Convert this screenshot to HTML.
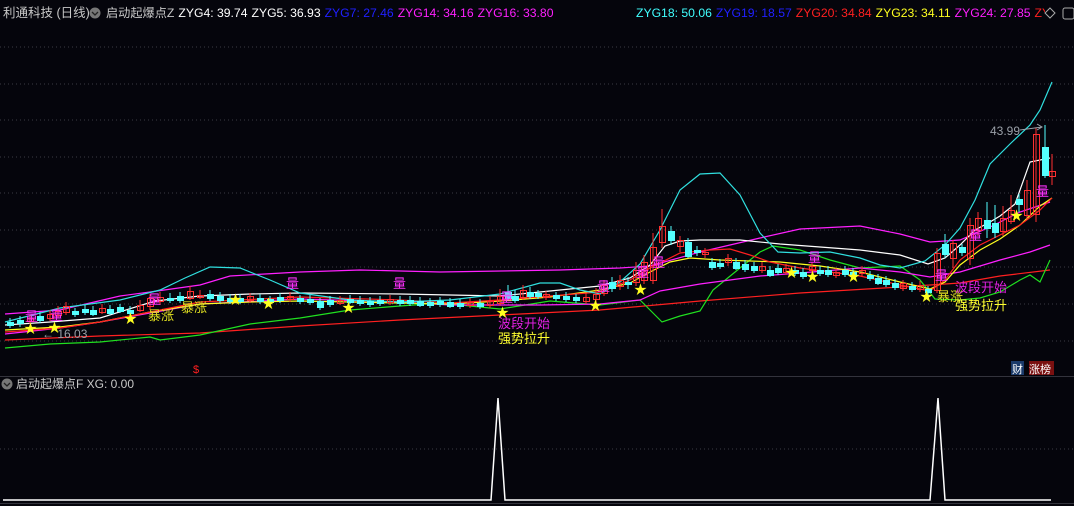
<!DOCTYPE html>
<html><head><meta charset="utf-8"><style>
html,body{margin:0;padding:0;background:#05050c;width:1074px;height:506px;overflow:hidden}
svg{display:block}
text{font-family:"Liberation Sans","Noto Sans CJK SC",sans-serif}
.u{fill:none;stroke:#ff3030;stroke-width:1}
.d{fill:#54ffff;stroke:#54ffff;stroke-width:1}
.wu{stroke:#ff3030}.wd{stroke:#54ffff}
.g{stroke:#3a3a44;stroke-dasharray:1 3}
.l{fill:none;stroke-width:1.2}
</style></head><body>
<svg width="1074" height="506" viewBox="0 0 1074 506">
<rect width="1074" height="506" fill="#05050c"/>
<g class="g">
<line x1="0" y1="47" x2="1074" y2="47"/><line x1="0" y1="84" x2="1074" y2="84"/>
<line x1="0" y1="120" x2="1074" y2="120"/><line x1="0" y1="157" x2="1074" y2="157"/>
<line x1="0" y1="193" x2="1074" y2="193"/><line x1="0" y1="230" x2="1074" y2="230"/>
<line x1="0" y1="267" x2="1074" y2="267"/><line x1="0" y1="304" x2="1074" y2="304"/>
<line x1="0" y1="341" x2="1074" y2="341"/><line x1="0" y1="449" x2="1074" y2="449"/>
</g>
<line x1="0" y1="376.5" x2="1074" y2="376.5" stroke="#33333c"/>
<line x1="0" y1="503.5" x2="1074" y2="503.5" stroke="#33333c"/>
<text x="3" y="17" font-size="12.5" fill="#c8c8c8">利通科技 (日线)</text>
<circle cx="95" cy="13" r="5.5" fill="#777"/><path d="M92 12 L95 15 L98 12" stroke="#222" fill="none" stroke-width="1.3"/>
<text x="106" y="17" font-size="12.2"><tspan fill="#c8c8c8">启动起爆点Z</tspan><tspan fill="#ffffff" dx="4">ZYG4: 39.74</tspan><tspan fill="#ffffff" dx="4">ZYG5: 36.93</tspan><tspan fill="#2020ff" dx="4">ZYG7: 27.46</tspan><tspan fill="#ff20ff" dx="4">ZYG14: 34.16</tspan><tspan fill="#ff20ff" dx="4">ZYG16: 33.80</tspan></text>
<text x="636" y="17" font-size="12.2"><tspan fill="#40ffff">ZYG18: 50.06</tspan><tspan fill="#2020ff" dx="4">ZYG19: 18.57</tspan><tspan fill="#ff2020" dx="4">ZYG20: 34.84</tspan><tspan fill="#ffff20" dx="4">ZYG23: 34.11</tspan><tspan fill="#ff20ff" dx="4">ZYG24: 27.85</tspan><tspan fill="#ff2020" dx="4">ZY</tspan></text>
<rect x="1045" y="6" width="29" height="14" fill="#05050c"/>
<path d="M1050 8 L1055 13 L1050 18 L1045 13 Z" stroke="#aaa" fill="none"/>
<rect x="1063" y="8" width="11" height="11" rx="2" stroke="#aaa" fill="none"/>
<polyline class="l" stroke="#ff2020" points="5,340 100,336 200,333 300,326 400,320 500,315 600,310 700,301 800,293 900,287 960,283 1000,276 1050,270"/>
<polyline class="l" stroke="#20e020" points="5,348 50,344 100,342 150,337 160,340 200,335 250,324 300,318 350,310 400,306 440,303 500,309 550,301 600,305 640,300 662,322 680,316 700,311 713,290 740,268 760,252 773,246 800,250 830,260 860,268 900,266 920,280 935,299 960,300 980,298 1000,292 1020,280 1030,275 1040,282 1050,260"/>
<polyline class="l" stroke="#ff20ff" points="5,334 60,328 100,322 150,313 200,304 300,299 400,302 450,305 540,305 600,304 640,300 660,291 700,284 760,276 800,273 860,268 900,272 930,277 960,272 1000,260 1030,252 1050,245"/>
<polyline class="l" stroke="#ff20ff" points="5,314 60,310 120,296 150,292 200,285 230,276 300,272 360,270 440,272 560,270 620,268 650,266 700,252 760,238 800,229 860,226 900,234 930,242 960,240 990,227 1020,212 1050,202"/>
<polyline class="l" stroke="#ffff20" points="5,330 60,327 100,322 150,312 200,304 250,302 300,301 400,303 450,304 500,301 550,297 600,290 630,283 650,272 670,262 690,258 720,260 780,262 820,266 860,272 900,282 930,289 945,282 960,265 980,250 1000,239 1020,225 1040,206 1052,198"/>
<polyline class="l" stroke="#ff2020" points="5,332 60,328 100,322 150,312 200,302 300,297 400,300 450,303 500,300 550,296 600,292 630,280 650,268 680,253 710,250 730,249 750,255 770,262 800,268 860,276 900,285 930,291 945,280 960,260 980,245 1000,235 1020,225 1040,210 1052,198"/>
<polyline class="l" stroke="#ffffff" points="5,325 50,322 100,318 155,301 200,296 250,294 300,293 400,294 450,295 500,296 540,292 600,286 630,278 650,265 665,246 680,241 700,240 740,240 780,244 820,247 860,250 900,255 928,264 945,258 960,245 975,230 990,222 1000,216 1015,204 1030,162 1050,158"/>
<polyline class="l" stroke="#30e0e0" points="5,322 60,308 120,300 160,290 185,278 210,267 240,268 270,280 300,293 350,300 400,302 450,300 500,294 540,283 560,283 580,290 600,294 620,282 640,264 660,230 680,190 700,174 720,173 740,195 760,233 778,252 800,253 830,252 860,258 880,265 900,268 925,261 945,245 960,228 975,200 990,164 1010,144 1030,125 1040,110 1052,82"/>
<g stroke-width="1">
<line class="wd" x1="10" y1="318" x2="10" y2="328"/><rect class="d" x="7.5" y="322.5" width="6" height="3"/>
<line class="wd" x1="20" y1="316" x2="20" y2="327"/><rect class="d" x="17.5" y="320.5" width="6" height="3"/>
<line class="wu" x1="30" y1="315" x2="30" y2="324"/><rect class="u" x="27.5" y="318.5" width="6" height="3"/>
<line class="wd" x1="40" y1="312" x2="40" y2="323"/><rect class="d" x="37.5" y="316.5" width="6" height="4"/>
<line class="wu" x1="50" y1="310" x2="50" y2="321"/><rect class="u" x="47.5" y="314.5" width="6" height="4"/>
<line class="wu" x1="58" y1="306" x2="58" y2="318"/><rect class="u" x="55.5" y="311.5" width="6" height="4"/>
<line class="wu" x1="66" y1="302" x2="66" y2="315"/><rect class="u" x="63.5" y="306.5" width="6" height="6"/>
<line class="wd" x1="75" y1="308" x2="75" y2="317"/><rect class="d" x="72.5" y="311.5" width="6" height="3"/>
<line class="wd" x1="85" y1="305" x2="85" y2="315"/><rect class="d" x="82.5" y="309.5" width="6" height="3"/>
<line class="wd" x1="93" y1="306" x2="93" y2="316"/><rect class="d" x="90.5" y="310.5" width="6" height="4"/>
<line class="wu" x1="102" y1="304" x2="102" y2="314"/><rect class="u" x="99.5" y="308.5" width="6" height="4"/>
<line class="wd" x1="110" y1="305" x2="110" y2="315"/><rect class="d" x="107.5" y="309.5" width="6" height="4"/>
<line class="wd" x1="120" y1="304" x2="120" y2="313"/><rect class="d" x="117.5" y="307.5" width="6" height="4"/>
<line class="wd" x1="130" y1="306" x2="130" y2="316"/><rect class="d" x="127.5" y="310.5" width="6" height="3"/>
<line class="wu" x1="140" y1="300" x2="140" y2="312"/><rect class="u" x="137.5" y="305.5" width="6" height="5"/>
<line class="wu" x1="150" y1="294" x2="150" y2="310"/><rect class="u" x="147.5" y="298.5" width="6" height="8"/>
<line class="wu" x1="160" y1="292" x2="160" y2="305"/><rect class="u" x="157.5" y="297.5" width="6" height="4"/>
<line class="wd" x1="170" y1="293" x2="170" y2="303"/><rect class="d" x="167.5" y="298.5" width="6" height="2"/>
<line class="wd" x1="180" y1="292" x2="180" y2="303"/><rect class="d" x="177.5" y="296.5" width="6" height="4"/>
<line class="wu" x1="190" y1="286" x2="190" y2="300"/><rect class="u" x="187.5" y="291.5" width="6" height="7"/>
<line class="wu" x1="200" y1="290" x2="200" y2="299"/><rect class="u" x="197.5" y="295.5" width="6" height="2"/>
<line class="wd" x1="210" y1="290" x2="210" y2="301"/><rect class="d" x="207.5" y="294.5" width="6" height="4"/>
<line class="wd" x1="220" y1="292" x2="220" y2="303"/><rect class="d" x="217.5" y="296.5" width="6" height="4"/>
<line class="wd" x1="230" y1="294" x2="230" y2="304"/><rect class="d" x="227.5" y="298.5" width="6" height="3"/>
<line class="wd" x1="240" y1="294" x2="240" y2="304"/><rect class="d" x="237.5" y="298.5" width="6" height="3"/>
<line class="wu" x1="250" y1="293" x2="250" y2="303"/><rect class="u" x="247.5" y="296.5" width="6" height="4"/>
<line class="wd" x1="260" y1="294" x2="260" y2="304"/><rect class="d" x="257.5" y="298.5" width="6" height="3"/>
<line class="wd" x1="270" y1="296" x2="270" y2="305"/><rect class="d" x="267.5" y="299.5" width="6" height="3"/>
<line class="wd" x1="280" y1="293" x2="280" y2="303"/><rect class="d" x="277.5" y="297.5" width="6" height="3"/>
<line class="wu" x1="290" y1="292" x2="290" y2="302"/><rect class="u" x="287.5" y="296.5" width="6" height="3"/>
<line class="wd" x1="300" y1="295" x2="300" y2="304"/><rect class="d" x="297.5" y="298.5" width="6" height="3"/>
<line class="wd" x1="310" y1="295" x2="310" y2="305"/><rect class="d" x="307.5" y="299.5" width="6" height="3"/>
<line class="wd" x1="320" y1="298" x2="320" y2="310"/><rect class="d" x="317.5" y="301.5" width="6" height="6"/>
<line class="wd" x1="330" y1="296" x2="330" y2="307"/><rect class="d" x="327.5" y="300.5" width="6" height="4"/>
<line class="wu" x1="340" y1="296" x2="340" y2="305"/><rect class="u" x="337.5" y="300.5" width="6" height="3"/>
<line class="wd" x1="350" y1="295" x2="350" y2="304"/><rect class="d" x="347.5" y="299.5" width="6" height="3"/>
<line class="wd" x1="360" y1="296" x2="360" y2="306"/><rect class="d" x="357.5" y="300.5" width="6" height="3"/>
<line class="wd" x1="370" y1="297" x2="370" y2="307"/><rect class="d" x="367.5" y="301.5" width="6" height="3"/>
<line class="wd" x1="380" y1="296" x2="380" y2="306"/><rect class="d" x="377.5" y="300.5" width="6" height="3"/>
<line class="wu" x1="390" y1="295" x2="390" y2="305"/><rect class="u" x="387.5" y="299.5" width="6" height="3"/>
<line class="wd" x1="400" y1="296" x2="400" y2="306"/><rect class="d" x="397.5" y="300.5" width="6" height="3"/>
<line class="wd" x1="410" y1="296" x2="410" y2="306"/><rect class="d" x="407.5" y="300.5" width="6" height="3"/>
<line class="wd" x1="420" y1="297" x2="420" y2="307"/><rect class="d" x="417.5" y="301.5" width="6" height="4"/>
<line class="wd" x1="430" y1="298" x2="430" y2="308"/><rect class="d" x="427.5" y="302.5" width="6" height="3"/>
<line class="wd" x1="440" y1="297" x2="440" y2="307"/><rect class="d" x="437.5" y="301.5" width="6" height="3"/>
<line class="wd" x1="450" y1="298" x2="450" y2="308"/><rect class="d" x="447.5" y="302.5" width="6" height="4"/>
<line class="wd" x1="460" y1="299" x2="460" y2="309"/><rect class="d" x="457.5" y="303.5" width="6" height="3"/>
<line class="wu" x1="470" y1="298" x2="470" y2="308"/><rect class="u" x="467.5" y="302.5" width="6" height="3"/>
<line class="wd" x1="480" y1="299" x2="480" y2="309"/><rect class="d" x="477.5" y="303.5" width="6" height="3"/>
<line class="wu" x1="490" y1="296" x2="490" y2="308"/><rect class="u" x="487.5" y="301.5" width="6" height="4"/>
<line class="wu" x1="500" y1="289" x2="500" y2="306"/><rect class="u" x="497.5" y="296.5" width="6" height="7"/>
<line class="wd" x1="508" y1="285" x2="508" y2="300"/><rect class="d" x="505.5" y="292.5" width="6" height="6"/>
<line class="wd" x1="515" y1="290" x2="515" y2="303"/><rect class="d" x="512.5" y="296.5" width="6" height="4"/>
<line class="wu" x1="523" y1="285" x2="523" y2="300"/><rect class="u" x="520.5" y="290.5" width="6" height="7"/>
<line class="wd" x1="530" y1="287" x2="530" y2="299"/><rect class="d" x="527.5" y="292.5" width="6" height="4"/>
<line class="wd" x1="538" y1="290" x2="538" y2="299"/><rect class="d" x="535.5" y="293.5" width="6" height="3"/>
<line class="wu" x1="546" y1="291" x2="546" y2="300"/><rect class="u" x="543.5" y="294.5" width="6" height="3"/>
<line class="wd" x1="556" y1="292" x2="556" y2="301"/><rect class="d" x="553.5" y="295.5" width="6" height="3"/>
<line class="wd" x1="566" y1="292" x2="566" y2="302"/><rect class="d" x="563.5" y="296.5" width="6" height="3"/>
<line class="wd" x1="576" y1="294" x2="576" y2="303"/><rect class="d" x="573.5" y="297.5" width="6" height="3"/>
<line class="wu" x1="586" y1="293" x2="586" y2="304"/><rect class="u" x="583.5" y="297.5" width="6" height="4"/>
<line class="wu" x1="596" y1="288" x2="596" y2="303"/><rect class="u" x="593.5" y="294.5" width="6" height="5"/>
<line class="wu" x1="604" y1="280" x2="604" y2="296"/><rect class="u" x="601.5" y="285.5" width="6" height="8"/>
<line class="wd" x1="612" y1="277" x2="612" y2="292"/><rect class="d" x="609.5" y="282.5" width="6" height="6"/>
<line class="wu" x1="620" y1="275" x2="620" y2="290"/><rect class="u" x="617.5" y="280.5" width="6" height="6"/>
<line class="wd" x1="628" y1="277" x2="628" y2="289"/><rect class="d" x="625.5" y="282.5" width="6" height="2"/>
<line class="wu" x1="636" y1="262" x2="636" y2="286"/><rect class="u" x="633.5" y="270.5" width="6" height="12"/>
<line class="wu" x1="644" y1="255" x2="644" y2="284"/><rect class="u" x="641.5" y="262.5" width="6" height="18"/>
<line class="wu" x1="653" y1="233" x2="653" y2="284"/><rect class="u" x="650.5" y="247.5" width="6" height="33"/>
<line class="wu" x1="662" y1="209" x2="662" y2="248"/><rect class="u" x="659.5" y="226.5" width="6" height="16"/>
<line class="wd" x1="671" y1="226" x2="671" y2="245"/><rect class="d" x="668.5" y="231.5" width="6" height="9"/>
<line class="wu" x1="680" y1="236" x2="680" y2="252"/><rect class="u" x="677.5" y="240.5" width="6" height="6"/>
<line class="wd" x1="688" y1="238" x2="688" y2="258"/><rect class="d" x="685.5" y="242.5" width="6" height="14"/>
<line class="wd" x1="697" y1="246" x2="697" y2="256"/><rect class="d" x="694.5" y="250.5" width="6" height="2"/>
<line class="wu" x1="705" y1="248" x2="705" y2="258"/><rect class="u" x="702.5" y="252.5" width="6" height="2"/>
<line class="wd" x1="712" y1="258" x2="712" y2="270"/><rect class="d" x="709.5" y="262.5" width="6" height="5"/>
<line class="wd" x1="720" y1="259" x2="720" y2="269"/><rect class="d" x="717.5" y="263.5" width="6" height="3"/>
<line class="wu" x1="728" y1="254" x2="728" y2="266"/><rect class="u" x="725.5" y="258.5" width="6" height="4"/>
<line class="wd" x1="736" y1="258" x2="736" y2="270"/><rect class="d" x="733.5" y="262.5" width="6" height="6"/>
<line class="wd" x1="745" y1="260" x2="745" y2="272"/><rect class="d" x="742.5" y="264.5" width="6" height="5"/>
<line class="wd" x1="754" y1="262" x2="754" y2="273"/><rect class="d" x="751.5" y="266.5" width="6" height="4"/>
<line class="wu" x1="762" y1="262" x2="762" y2="273"/><rect class="u" x="759.5" y="266.5" width="6" height="4"/>
<line class="wd" x1="770" y1="266" x2="770" y2="277"/><rect class="d" x="767.5" y="270.5" width="6" height="5"/>
<line class="wd" x1="778" y1="264" x2="778" y2="275"/><rect class="d" x="775.5" y="268.5" width="6" height="4"/>
<line class="wu" x1="786" y1="264" x2="786" y2="275"/><rect class="u" x="783.5" y="268.5" width="6" height="4"/>
<line class="wd" x1="795" y1="266" x2="795" y2="276"/><rect class="d" x="792.5" y="270.5" width="6" height="3"/>
<line class="wd" x1="803" y1="268" x2="803" y2="279"/><rect class="d" x="800.5" y="272.5" width="6" height="4"/>
<line class="wu" x1="812" y1="262" x2="812" y2="274"/><rect class="u" x="809.5" y="266.5" width="6" height="4"/>
<line class="wd" x1="820" y1="266" x2="820" y2="276"/><rect class="d" x="817.5" y="270.5" width="6" height="3"/>
<line class="wd" x1="828" y1="266" x2="828" y2="277"/><rect class="d" x="825.5" y="270.5" width="6" height="4"/>
<line class="wu" x1="836" y1="268" x2="836" y2="278"/><rect class="u" x="833.5" y="272.5" width="6" height="3"/>
<line class="wd" x1="845" y1="266" x2="845" y2="277"/><rect class="d" x="842.5" y="270.5" width="6" height="4"/>
<line class="wd" x1="853" y1="268" x2="853" y2="279"/><rect class="d" x="850.5" y="272.5" width="6" height="4"/>
<line class="wu" x1="862" y1="266" x2="862" y2="276"/><rect class="u" x="859.5" y="270.5" width="6" height="3"/>
<line class="wd" x1="870" y1="271" x2="870" y2="281"/><rect class="d" x="867.5" y="275.5" width="6" height="3"/>
<line class="wd" x1="878" y1="274" x2="878" y2="285"/><rect class="d" x="875.5" y="278.5" width="6" height="5"/>
<line class="wd" x1="886" y1="276" x2="886" y2="287"/><rect class="d" x="883.5" y="280.5" width="6" height="4"/>
<line class="wd" x1="895" y1="279" x2="895" y2="290"/><rect class="d" x="892.5" y="283.5" width="6" height="4"/>
<line class="wu" x1="903" y1="280" x2="903" y2="291"/><rect class="u" x="900.5" y="283.5" width="6" height="5"/>
<line class="wd" x1="912" y1="282" x2="912" y2="292"/><rect class="d" x="909.5" y="286.5" width="6" height="3"/>
<line class="wu" x1="920" y1="281" x2="920" y2="292"/><rect class="u" x="917.5" y="285.5" width="6" height="4"/>
<line class="wd" x1="928" y1="286" x2="928" y2="295"/><rect class="d" x="925.5" y="289.5" width="6" height="3"/>
<line class="wu" x1="937" y1="248" x2="937" y2="293"/><rect class="u" x="934.5" y="253.5" width="6" height="37"/>
<line class="wd" x1="945" y1="234" x2="945" y2="258"/><rect class="d" x="942.5" y="244.5" width="6" height="10"/>
<line class="wu" x1="953" y1="240" x2="953" y2="268"/><rect class="u" x="950.5" y="243.5" width="6" height="15"/>
<line class="wd" x1="962" y1="244" x2="962" y2="256"/><rect class="d" x="959.5" y="247.5" width="6" height="5"/>
<line class="wu" x1="970" y1="218" x2="970" y2="265"/><rect class="u" x="967.5" y="225.5" width="6" height="33"/>
<line class="wu" x1="978" y1="212" x2="978" y2="236"/><rect class="u" x="975.5" y="218.5" width="6" height="12"/>
<line class="wd" x1="987" y1="202" x2="987" y2="238"/><rect class="d" x="984.5" y="220.5" width="6" height="8"/>
<line class="wd" x1="995" y1="205" x2="995" y2="238"/><rect class="d" x="992.5" y="223.5" width="6" height="9"/>
<line class="wu" x1="1003" y1="206" x2="1003" y2="236"/><rect class="u" x="1000.5" y="218.5" width="6" height="13"/>
<line class="wu" x1="1011" y1="195" x2="1011" y2="224"/><rect class="u" x="1008.5" y="210.5" width="6" height="11"/>
<line class="wd" x1="1019" y1="194" x2="1019" y2="212"/><rect class="d" x="1016.5" y="199.5" width="6" height="5"/>
<line class="wu" x1="1027" y1="180" x2="1027" y2="220"/><rect class="u" x="1024.5" y="190.5" width="6" height="25"/>
<line class="wu" x1="1036" y1="128" x2="1036" y2="222"/><rect class="u" x="1033.5" y="134.5" width="6" height="80"/>
<line class="wd" x1="1045" y1="125" x2="1045" y2="178"/><rect class="d" x="1042.5" y="147.5" width="6" height="28"/>
<line class="wu" x1="1052" y1="154" x2="1052" y2="185"/><rect class="u" x="1049.5" y="171.5" width="6" height="5"/>
</g>
<g font-size="13" fill="#ff30ff">
<text x="25" y="321">量</text><text x="50" y="320">量</text><text x="148" y="304">量</text>
<text x="286" y="288">量</text><text x="393" y="288">量</text><text x="500" y="302">量</text>
<text x="597" y="291">量</text><text x="636" y="277">量</text><text x="652" y="267">量</text>
<text x="808" y="262">量</text><text x="935" y="280">量</text><text x="969" y="240">量</text><text x="1036" y="196">量</text>
</g>
<g fill="#ffff20" font-size="13">
<text x="24" y="333">★</text><text x="48" y="332">★</text><text x="124" y="323">★</text>
<text x="229" y="304">★</text><text x="262" y="308">★</text><text x="342" y="312">★</text>
<text x="496" y="317">★</text><text x="589" y="310">★</text><text x="634" y="294">★</text>
<text x="785" y="277">★</text><text x="806" y="281">★</text><text x="847" y="281">★</text>
<text x="920" y="301">★</text><text x="1010" y="220">★</text>
</g>
<g font-size="13">
<text x="148" y="320" fill="#e0e020">暴涨</text><text x="181" y="312" fill="#e0e020">暴涨</text>
<text x="498" y="328" fill="#e020e0">波段开始</text><text x="498" y="343" fill="#ffff30">强势拉升</text>
<text x="937" y="301" fill="#e0e020">暴涨</text>
<text x="955" y="292" fill="#e020e0">波段开始</text><text x="955" y="310" fill="#ffff30">强势拉升</text>
</g>
<text x="42" y="338" font-size="12" fill="#9aa0a8">← 16.03</text>
<text x="990" y="135" font-size="12" fill="#9aa0a8">43.99</text>
<path d="M1020 130 L1042 127 M1037 124 L1042 127 L1037 130" stroke="#9aa0a8" fill="none"/>
<text x="193" y="373" font-size="11" fill="#ff2020">$</text>
<rect x="1011" y="361" width="13" height="14" fill="#1a3a6a"/><text x="1012" y="373" font-size="11" fill="#ffffff">财</text>
<rect x="1029" y="361" width="25" height="14" fill="#7a1010"/><text x="1029" y="373" font-size="11" fill="#ffffff">涨榜</text>
<circle cx="7" cy="384" r="5.5" fill="#777"/><path d="M4 383 L7 386 L10 383" stroke="#222" fill="none" stroke-width="1.3"/>
<text x="16" y="388" font-size="12" fill="#c8c8c8">启动起爆点F  XG: 0.00</text>
<polyline fill="none" stroke="#ffffff" stroke-width="1.5" points="3,500 491,500 498,398 505,500 930,500 938,398 945,500 1051,500"/>
</svg>
</body></html>
